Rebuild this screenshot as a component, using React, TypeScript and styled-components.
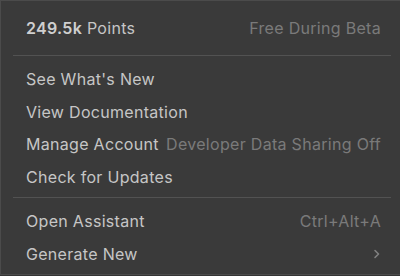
import React from 'react';
import styled, { createGlobalStyle } from 'styled-components';

const GlobalStyle = createGlobalStyle`
    html, body {
        margin: 0;
        padding: 0;
        background: #353535;
        overflow: hidden;
    }
    body {
        font-family: Inter, "Noto Sans", sans-serif;
        -webkit-font-smoothing: antialiased;
    }
`;

interface menuItem {
    label: string;
    hint?: string;
    submenu?: boolean;
}

const helpItems: menuItem[] = [
    { label: "See What's New" },
    { label: 'View Documentation' },
    { label: 'Manage Account', hint: 'Developer Data Sharing Off' },
    { label: 'Check for Updates' },
];

const actionItems: menuItem[] = [
    { label: 'Open Assistant', hint: 'Ctrl+Alt+A' },
    { label: 'Generate New', submenu: true },
];

const Chevron = () => (
    <svg width="8" height="10" viewBox="0 0 8 10" fill="none">
        <path d="M2 1.5 L5.5 5 L2 8.5" stroke="#808080" strokeWidth="1.6" strokeLinecap="round" strokeLinejoin="round" />
    </svg>
);

const MenuRow = ({ item }: { item: menuItem }) => (
    <Row>
        <Label>{item.label}</Label>
        {item.hint && <Hint>{item.hint}</Hint>}
        {item.submenu && <Chevron />}
    </Row>
);

export default function App() {
    return (
        <>
            <GlobalStyle />
            <Panel>
                <Header>
                    <Label>
                        <Strong>249.5k</Strong> Points
                    </Label>
                    <Hint>Free During Beta</Hint>
                </Header>
                <Divider />
                <Section>
                    {helpItems.map(item => <MenuRow key={item.label} item={item} />)}
                </Section>
                <Divider />
                <Section>
                    {actionItems.map(item => <MenuRow key={item.label} item={item} />)}
                </Section>
            </Panel>
        </>
    );
}

const Panel = styled.div`
    width: 410px;
    height: 273px;
    background: #3a3a3a;
    border: 1px solid #4b4b4b;
    border-right: none;
    display: flex;
    flex-direction: column;
    box-sizing: content-box;
`;

const Header = styled.div`
    height: 55px;
    display: flex;
    align-items: center;
    justify-content: space-between;
    padding: 0 20px 0 25px;
    box-sizing: border-box;
    width: 400px;
`;

const Divider = styled.div`
    height: 1px;
    width: 378px;
    margin-left: 12px;
    background: #525252;
`;

const Section = styled.div`
    display: flex;
    flex-direction: column;
    padding: 7px 0 4px;
    width: 400px;
`;

const Row = styled.div`
    height: 32.5px;
    display: flex;
    align-items: center;
    justify-content: space-between;
    padding: 0 20px 0 25px;
`;

const Label = styled.span`
    font-size: 16px;
    letter-spacing: 0.3px;
    color: #c6c6c6;
    white-space: nowrap;
`;

const Strong = styled.b`
    font-weight: 600;
    color: #cfcfcf;
`;

const Hint = styled.span`
    font-size: 16px;
    letter-spacing: 0.3px;
    color: #7a7a7a;
    white-space: nowrap;
`;
